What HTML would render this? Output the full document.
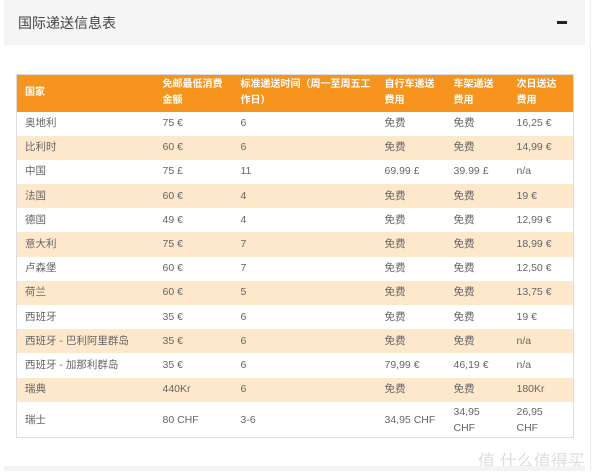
<!DOCTYPE html>
<html><head><meta charset="utf-8"><style>
body{margin:0;width:600px;height:471px;background:#fff;position:relative;overflow:hidden;font-family:"Liberation Sans","Noto Sans CJK SC",sans-serif;}
.hd{position:absolute;left:4px;top:0;width:581px;height:45px;background:#f5f5f5;}
.hd span{position:absolute;left:14px;top:13px;font-size:14px;color:#444;}
.hd i{position:absolute;left:553px;top:21px;width:10px;height:3px;background:#222;}
.ft{position:absolute;left:4px;top:466px;width:581px;height:5px;background:#f3f3f3;}
.rl{position:absolute;left:590px;top:0;width:1px;height:471px;background:#eee;}
table{position:absolute;left:16px;top:74px;width:558px;border-collapse:collapse;border:1px solid #ddd;font-size:10.5px;color:#666;table-layout:fixed;}
td,th{padding:0 0 0 8px;text-align:left;vertical-align:middle;height:24.2px;line-height:13px;box-sizing:border-box;white-space:nowrap;}
th{background:#f7941d;color:#fff;font-weight:bold;height:37px;line-height:16px;font-size:10px;}
tr:nth-child(odd) td{background:#fde8cc;}
tr.l td{height:36px;line-height:16px;}
.wm{position:absolute;left:478px;top:447px;font-size:17px;color:#ddd;}
</style></head><body>
<div class="hd"><span>国际递送信息表</span><i></i></div>
<table>
<colgroup><col style="width:138px"><col style="width:78px"><col style="width:144px"><col style="width:69px"><col style="width:63px"><col></colgroup>
<tr><th>国家</th><th>免邮最低消费<br>金额</th><th>标准递送时间（周一至周五工<br>作日）</th><th>自行车递送<br>费用</th><th>车架递送<br>费用</th><th>次日送达<br>费用</th></tr>
<tr><td>奥地利</td><td>75 €</td><td>6</td><td>免费</td><td>免费</td><td>16,25 €</td></tr>
<tr><td>比利时</td><td>60 €</td><td>6</td><td>免费</td><td>免费</td><td>14,99 €</td></tr>
<tr><td>中国</td><td>75 £</td><td>11</td><td>69.99 £</td><td>39.99 £</td><td>n/a</td></tr>
<tr><td>法国</td><td>60 €</td><td>4</td><td>免费</td><td>免费</td><td>19 €</td></tr>
<tr><td>德国</td><td>49 €</td><td>4</td><td>免费</td><td>免费</td><td>12,99 €</td></tr>
<tr><td>意大利</td><td>75 €</td><td>7</td><td>免费</td><td>免费</td><td>18,99 €</td></tr>
<tr><td>卢森堡</td><td>60 €</td><td>7</td><td>免费</td><td>免费</td><td>12,50 €</td></tr>
<tr><td>荷兰</td><td>60 €</td><td>5</td><td>免费</td><td>免费</td><td>13,75 €</td></tr>
<tr><td>西班牙</td><td>35 €</td><td>6</td><td>免费</td><td>免费</td><td>19 €</td></tr>
<tr><td>西班牙 - 巴利阿里群岛</td><td>35 €</td><td>6</td><td>免费</td><td>免费</td><td>n/a</td></tr>
<tr><td>西班牙 - 加那利群岛</td><td>35 €</td><td>6</td><td>79,99 €</td><td>46,19 €</td><td>n/a</td></tr>
<tr><td>瑞典</td><td>440Kr</td><td>6</td><td>免费</td><td>免费</td><td>180Kr</td></tr>
<tr class="l"><td>瑞士</td><td>80 CHF</td><td>3-6</td><td>34,95 CHF</td><td>34,95<br>CHF</td><td>26,95<br>CHF</td></tr>
</table>
<div class="wm">值 什么值得买</div>
<div class="ft"></div><div class="rl"></div>
</body></html>
